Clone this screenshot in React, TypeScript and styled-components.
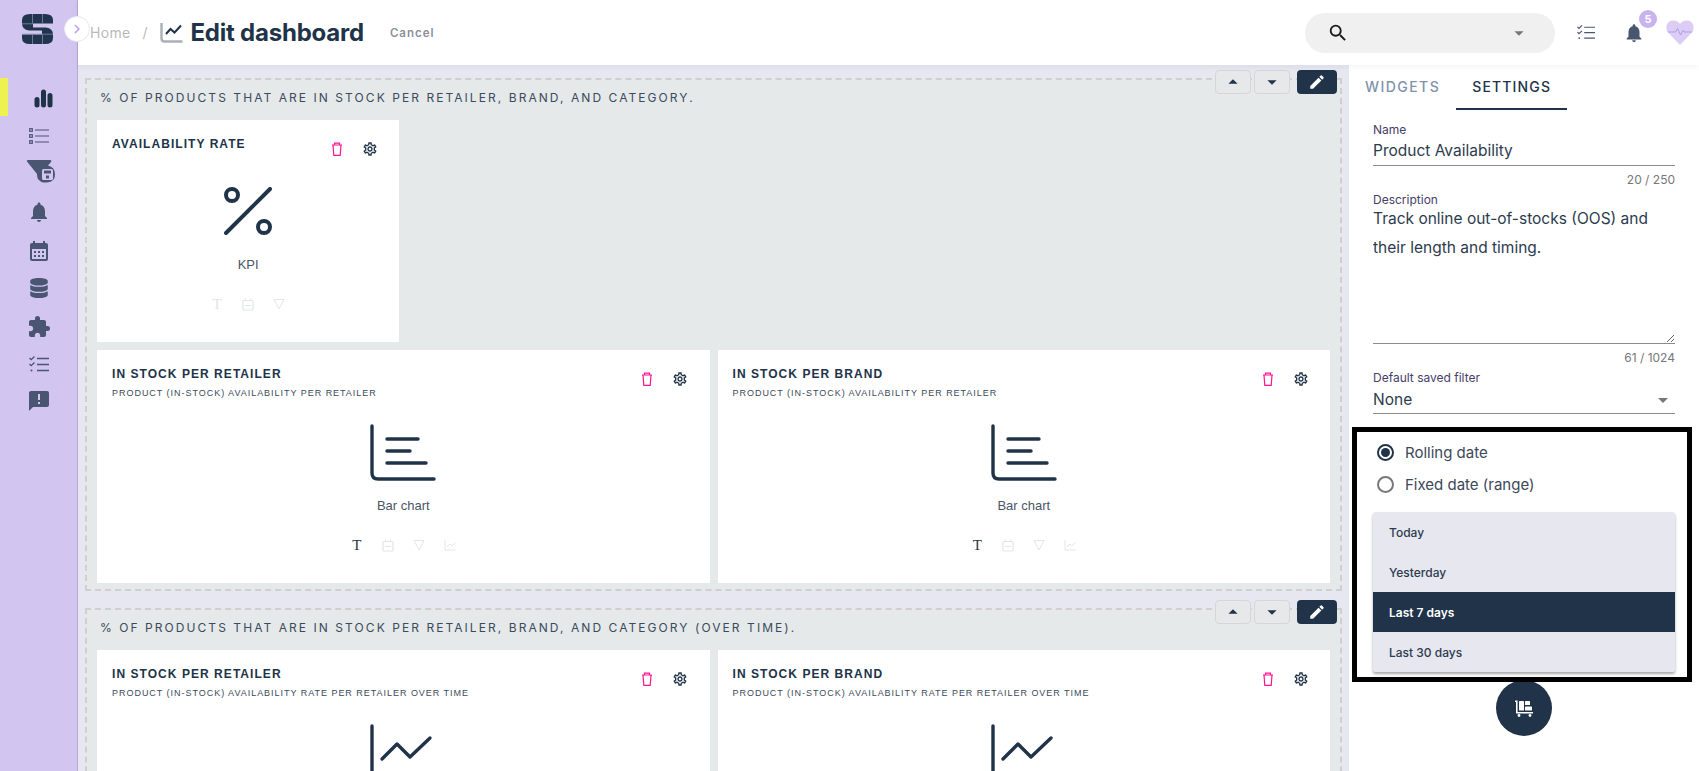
import React from "react";
import styled, { createGlobalStyle } from "styled-components";
import { MdNotifications, MdCalendarMonth, MdExtension, MdAnnouncement, MdOutlineSettings, MdEdit, MdSearch, MdArrowDropDown, MdArrowDropUp, MdChevronRight } from "react-icons/md";
import { FaDatabase } from "react-icons/fa";

const navy = "#203349";
const slate = "#4a5572";

const Global = createGlobalStyle`
  html, body { margin: 0; padding: 0; height: 100%; overflow: hidden; background: #fff; }
  body { font-family: Inter, "Liberation Sans", sans-serif; color: ${navy}; }
  * { box-sizing: border-box; }
`;

const Shell = styled.div`display: flex; width: 1699px; height: 771px; overflow: hidden; position: relative;`;
const Sidebar = styled.nav`width: 78px; flex: none; background: #d2c5f0; border-right: 1px solid #b7a8da; display: flex; flex-direction: column;`;
const LogoSlot = styled.div`height: 78px; padding: 14px 0 0 22px; flex: none;`;
const NavItem = styled.div<{ $active?: boolean; $nudge?: number; $dx?: number }>`
  height: 38px; display: flex; align-items: center; justify-content: center;
  border-left: 8px solid ${p => (p.$active ? "#eef24f" : "transparent")};
  color: ${p => (p.$active ? navy : slate)};
  padding-right: 8px;
  svg { transform: translate(${p => p.$dx ?? 0}px, ${p => p.$nudge ?? 0}px); }
`;
const Expand = styled.button`
  position: absolute; left: 64px; top: 16px; width: 26px; height: 26px; border-radius: 50%; border: 1px solid #ece6f8;
  background: #fff; color: #b9a2ea; display: flex; align-items: center; justify-content: center; padding: 0; z-index: 5;
`;
const Main = styled.div`flex: 1; min-width: 0; display: flex; flex-direction: column;`;
const Header = styled.header`
  height: 65px; flex: none; background: #fff; display: flex; align-items: center; padding-left: 12px;
  box-shadow: 0 2px 6px rgba(32, 51, 73, 0.06); position: relative; z-index: 2;
`;
const Crumb = styled.span`font-size: 14px; color: #b9b9b9; letter-spacing: 0.3px;`;
const Slash = styled.span`font-size: 14px; color: #b9b9b9; margin: 0 13px 0 12px;`;
const Title = styled.h1`margin: 0 0 0 7px; font-size: 24px; line-height: 30px; font-weight: 700; color: ${navy}; letter-spacing: -0.22px;`;
const Cancel = styled.span`margin-left: 26px; font-size: 11.5px; font-weight: 600; letter-spacing: 1px; color: #8a8f98;`;
const Right = styled.div`margin-left: auto; display: flex; align-items: center;`;
const Search = styled.div`
  width: 250px; height: 40px; border-radius: 20px; background: #f0f0f0; display: flex; align-items: center;
  justify-content: space-between; padding: 0 25px 0 22px; color: #1a1a1a;
  svg:last-child { color: #777; }
`;
const TopIcon = styled.div<{ $w: number; $pl?: number }>`
  width: ${p => p.$w}px; padding-left: ${p => p.$pl ?? 0}px; display: flex; align-items: center; justify-content: center; color: ${slate}; position: relative; height: 40px;
`;
const Badge = styled.span`
  position: absolute; left: 22px; top: -3px; width: 18px; height: 18px; border-radius: 50%; background: #c9b3ee; color: #fff;
  font-size: 11px; font-weight: 700; display: flex; align-items: center; justify-content: center;
`;
const Body = styled.div`flex: 1; min-height: 0; display: flex;`;
const Canvas = styled.main`flex: 1; min-width: 0; overflow: hidden; background: #e6e7f0; padding: 13px 7px 0;`;
const Section = styled.section`
  position: relative; background: #e5e9ea; border: 2px dashed #cfcfcf; padding: 0 10px 6px; margin-bottom: 17px;
`;
const SectionTitle = styled.h2`
  margin: 0 0 0 3px; padding: 10px 0 14px; font-size: 12px; line-height: 16px; font-weight: 400; letter-spacing: 2.06px;
  color: #3b4a5c; white-space: nowrap;
`;
const SectionTools = styled.div`position: absolute; top: -10px; right: 3px; display: flex; gap: 3px;`;
const MoveBtn = styled.button`
  width: 36px; height: 24px; padding: 0; background: #e6e8ea; border: 1px solid #d5d6d8; border-radius: 4px; color: ${navy};
  display: flex; align-items: center; justify-content: center;
`;
const EditBtn = styled.button`
  width: 40px; height: 24px; margin-left: 4px; padding: 0; border: 0; border-radius: 4px; background: ${navy}; color: #fff;
  display: flex; align-items: center; justify-content: center;
`;
const Grid = styled.div`display: grid; grid-template-columns: repeat(12, 1fr); column-gap: 8px; row-gap: 8px;`;
const Card = styled.article<{ $span: number; $h: number }>`
  grid-column: span ${p => p.$span}; height: ${p => p.$h}px; background: #fff; padding: 16px 21.5px 0 15px;
`;
const CardHead = styled.div`display: flex; min-height: 34px;`;
const CardText = styled.div`flex: 1; min-width: 0;`;
const CardTitle = styled.h3`margin: 0; font-family: "Liberation Sans", sans-serif; font-size: 12px; line-height: 16px; font-weight: 700; letter-spacing: 1.05px; color: ${navy};`;
const CardSub = styled.p`margin: 3px 0 0; font-family: "Liberation Sans", sans-serif; font-size: 9px; line-height: 16px; letter-spacing: 0.97px; color: #3b4a5c; white-space: nowrap;`;
const CardActions = styled.div`display: flex; gap: 17px; margin-top: 5px; flex: none; align-self: flex-start; color: ${navy};`;
const Preview = styled.div<{ $top: number }>`display: flex; flex-direction: column; align-items: center; margin: ${p => p.$top}px -21.5px 0 -15px;`;
const PreviewLabel = styled.div<{ $top: number }>`margin-top: ${p => p.$top}px; font-family: "Liberation Sans", sans-serif; font-size: 13px; line-height: 16px; color: #4a5568;`;
const Tools = styled.div`margin-top: 24px; height: 16px; display: flex; gap: 17px; justify-content: center;`;
const Tool = styled.span<{ $on?: boolean }>`
  width: 14px; height: 14px; display: flex; align-items: center; justify-content: center; color: ${p => (p.$on ? "#2a3442" : "#e3e5e9")};
`;
const TextGlyph = styled.span`font: 400 15px/14px "Liberation Serif", serif;`;
const Panel = styled.aside`width: 350px; flex: none; background: #fff; display: flex; flex-direction: column;`;
const Tabs = styled.div`height: 45px; flex: none; display: flex;`;
const Tab = styled.div<{ $on?: boolean }>`
  height: 45px; padding: 13px 16px 0; font-size: 14px; line-height: 17px; letter-spacing: ${p => (p.$on ? "1.15px" : "1.45px")}; font-weight: 500;
  color: ${p => (p.$on ? navy : "#7f93ad")}; border-bottom: 2px solid ${p => (p.$on ? navy : "transparent")};
`;
const Form = styled.div`padding: 12px 24px 0; display: flex; flex-direction: column;`;
const Label = styled.label`display: block; font-size: 12px; line-height: 16px; color: #46406b;`;
const TextInput = styled.input`
  display: block; width: 100%; height: 28px; padding: 0 0 2px; border: 0; border-bottom: 1px solid #8c8c8c; outline: 0; background: none;
  font: 400 15.5px Inter, sans-serif; color: #2d3b4e;
`;
const TextArea = styled.textarea`
  display: block; width: 100%; height: 140px; margin-top: -4px; padding: 0; border: 0; border-bottom: 1px solid #8c8c8c; outline: 0; background: none;
  font: 400 15.5px/29px Inter, sans-serif; color: #2d3b4e; resize: vertical;
`;
const Count = styled.div`height: 20px; margin-top: 6px; font-size: 12px; line-height: 16px; color: #777; text-align: right;`;
const Select = styled.div`
  height: 28px; border-bottom: 1px solid #8c8c8c; display: flex; align-items: center; justify-content: space-between;
  font-size: 15.5px; color: #2d3b4e; svg { color: #777; }
`;
const DateBox = styled.div`
  width: 340px; height: 255px; margin: 13px 0 0 3px; border: 5px solid #000; padding: 4px 12px 0 16px; background: #fff; position: relative; z-index: 1; flex: none;
`;
const RadioRow = styled.label`height: 32px; display: flex; align-items: center; gap: 11px; padding-left: 4px; font-size: 15px; color: #3c4859;`;
const RadioDot = styled.span<{ $on?: boolean }>`
  width: 17px; height: 17px; border-radius: 50%; border: 2px solid ${p => (p.$on ? navy : "#777")}; display: flex; align-items: center; justify-content: center;
  &::after { content: ""; width: 9px; height: 9px; border-radius: 50%; background: ${p => (p.$on ? navy : "transparent")}; }
`;
const Menu = styled.ul`
  margin: 12px 0 0; padding: 0; list-style: none; background: #e6e7ef; border-radius: 3px 3px 2px 2px;
  box-shadow: 0 2px 3px rgba(0, 0, 0, 0.35);
`;
const MenuItem = styled.li<{ $on?: boolean }>`
  height: 40px; display: flex; align-items: center; padding-left: 16px; font-size: 12px; font-weight: ${p => (p.$on ? 600 : 500)};
  background: ${p => (p.$on ? navy : "transparent")}; color: ${p => (p.$on ? "#fff" : "#2d3b4e")};
`;
const Fab = styled.button`
  width: 56px; height: 56px; margin: -2px auto 0; flex: none; border: 0; border-radius: 50%; background: ${navy}; color: #fff;
  display: flex; align-items: center; justify-content: center; padding: 0;
`;

const Logo = () => (
  <svg width="31" height="30" viewBox="0 0 31 30">
    <path d="M8 0H23Q31 0 31 6V9.5H11V13.5H24Q31 14 31 21V24Q31 30 23 30H8Q0 30 0 24V20.5H20V16.5H7Q0 16 0 9V6Q0 0 8 0Z" fill="#22354e" />
    <path d="M10.5 0V9.5M20.5 0V9.5M0 9.8H11M10.5 20.5V30M20.5 20.5V30M0 20.2H31" stroke="#7f8ba6" strokeWidth="0.8" fill="none" />
  </svg>
);
const BarsNav = () => (
  <svg width="19" height="19" viewBox="0 0 19 19" fill="currentColor">
    <rect x="0.5" y="8" width="5" height="10.5" rx="2.5" /><rect x="7" y="0.5" width="5" height="18" rx="2.5" /><rect x="13.5" y="4" width="5" height="14.5" rx="2.5" />
  </svg>
);
const ListNav = () => (
  <svg width="20" height="16" viewBox="0 0 20 16" fill="none" stroke="currentColor">
    <rect x="0.7" y="0.7" width="2.6" height="2.6" strokeWidth="1.2" /><rect x="0.7" y="6.7" width="2.6" height="2.6" strokeWidth="1.2" /><rect x="0.7" y="12.7" width="2.6" height="2.6" strokeWidth="1.2" />
    <path d="M6 2H20M6 8H20M6 14H20" strokeWidth="1.2" />
  </svg>
);
const FilterNav = () => (
  <svg width="30" height="24" viewBox="0 0 30 24" fill="currentColor">
    <path d="M1 1.5Q0 .3 2 0H24Q26 .2 25 2L22 5.5Q29 7 29 14.5 29 22 21 22.5 15 23 13 20 11 19 11 14Z" />
    <rect x="16" y="9" width="11" height="11" rx="1.5" fill="#d2c5f0" />
    <rect x="18" y="10.5" width="7" height="3" fill="currentColor" /><rect x="20" y="15.5" width="3" height="3" fill="currentColor" />
  </svg>
);
const Checks = ({ w = 20 }: { w?: number }) => (
  <svg width={w} height={w * 0.8} viewBox="0 0 20 16" fill="none" stroke="currentColor" strokeWidth="1.3">
    <path d="M.5 2L2.2 3.7 5.5.5M.5 8L2.2 9.7 5.5 6.5M8 2.5H20M8 8.5H20M8 14.5H20" />
    <circle cx="2.5" cy="14.5" r="1" fill="currentColor" stroke="none" />
  </svg>
);
const Trash = () => (
  <svg width="16" height="16" viewBox="0 0 16 16" fill="none" stroke="#ff1493" strokeWidth="1.2">
    <path d="M3 4H13M5.5 3.8V2.2H10.5V3.8M4 4L4.8 14.4H11.2L12 4" />
  </svg>
);
const Percent = () => (
  <svg width="48" height="48" viewBox="0 0 48 48" fill="none" stroke={navy} strokeWidth="4" strokeLinecap="round" style={{ display: "block" }}>
    <circle cx="8" cy="8" r="6" /><circle cx="40" cy="40" r="6" /><path d="M46 2L2 46" />
  </svg>
);
const BigChart = ({ line }: { line?: boolean }) => (
  <svg width="66" height="58" viewBox="0 0 66 58" fill="none" stroke={navy} strokeWidth="3.4" strokeLinecap="round" strokeLinejoin="round" style={{ display: "block" }}>
    <path d="M2 2V49Q2 55 8 55H64" />
    {line ? <path d="M12 35L27 20 40 33 60 14" /> : <path d="M17 15H48M17 27H40M17 39H56" />}
  </svg>
);
const Cal = () => (
  <svg width="12" height="13" viewBox="0 0 12 13" fill="none" stroke="currentColor" strokeWidth="1.2">
    <rect x="1" y="2.5" width="10" height="9.5" rx="1" /><path d="M3.5 0.5V3M8.5 0.5V3M3 7.5H9" />
  </svg>
);
const Funnel = () => (
  <svg width="12" height="12" viewBox="0 0 12 12" fill="none" stroke="currentColor" strokeWidth="1">
    <path d="M1 1.5H11L6 11Z" />
  </svg>
);
const MiniLine = () => (
  <svg width="12" height="12" viewBox="0 0 12 12" fill="none" stroke="currentColor" strokeWidth="1">
    <path d="M1 1V11H11.5M3 8L6 5 8 7 11 3.5" />
  </svg>
);
const TrendTitle = () => (
  <svg width="23" height="21" viewBox="0 0 23 21" fill="none" style={{ display: "block" }}>
    <path d="M1.5 1V16.5Q1.5 19.5 4.5 19.5H22.5" stroke="#a9b0ba" strokeWidth="2.4" />
    <path d="M6 12L10.5 7 14.5 10.5 21 3.5" stroke={navy} strokeWidth="2" />
  </svg>
);
const Heart = () => (
  <svg width="28" height="25" viewBox="0 0 28 25">
    <path d="M14 25L2 12.5C-1 9 0 2 6 .6 9.5 0 12.5 1.5 14 4 15.5 1.5 18.5 0 22 .6 28 2 29 9 26 12.5Z" fill="#dccdf6" />
    <path d="M2 12H9.5L11.5 8.5 14.5 15 17 10.5 18 12H26" fill="none" stroke="#b39ae6" strokeWidth="1" />
  </svg>
);
const Cart = () => (
  <svg width="18" height="17" viewBox="0 0 18 17" fill="#fff">
    <path d="M0 .5H2.6V12H18V13.6H1V2H0Z" /><rect x="4" y="1" width="5" height="9.5" rx=".6" /><rect x="10" y="1" width="5" height="4" rx=".6" /><rect x="10" y="6.5" width="7" height="4" rx=".6" />
    <circle cx="4" cy="15.5" r="1.4" /><circle cx="15" cy="15.5" r="1.4" />
  </svg>
);

type W = { title: string; sub?: string; kind: "kpi" | "bar" | "line"; span: number; h: number };

const Widget = ({ title, sub, kind, span, h }: W) => (
  <Card $span={span} $h={h}>
    <CardHead>
      <CardText>
        <CardTitle>{title}</CardTitle>
        {sub && <CardSub>{sub}</CardSub>}
      </CardText>
      <CardActions>
        <Trash />
        <MdOutlineSettings size={16} />
      </CardActions>
    </CardHead>
    {kind === "kpi" && (
      <Preview $top={17}>
        <Percent />
        <PreviewLabel $top={22}>KPI</PreviewLabel>
        <Tools>
          <Tool><TextGlyph>T</TextGlyph></Tool><Tool><Cal /></Tool><Tool><Funnel /></Tool>
        </Tools>
      </Preview>
    )}
    {kind === "bar" && (
      <Preview $top={23}>
        <BigChart />
        <PreviewLabel $top={16}>Bar chart</PreviewLabel>
        <Tools>
          <Tool $on><TextGlyph>T</TextGlyph></Tool><Tool><Cal /></Tool><Tool><Funnel /></Tool><Tool><MiniLine /></Tool>
        </Tools>
      </Preview>
    )}
    {kind === "line" && (
      <Preview $top={23}>
        <BigChart line />
      </Preview>
    )}
  </Card>
);

const SectionBar = () => (
  <SectionTools>
    <MoveBtn><MdArrowDropUp size={22} /></MoveBtn>
    <MoveBtn><MdArrowDropDown size={22} /></MoveBtn>
    <EditBtn><MdEdit size={18} /></EditBtn>
  </SectionTools>
);

export default function App() {
  return (
    <Shell>
      <Global />
      <Sidebar>
        <LogoSlot><Logo /></LogoSlot>
        <NavItem $active $dx={5} $nudge={1}><BarsNav /></NavItem>
        <NavItem $nudge={1}><ListNav /></NavItem>
        <NavItem $nudge={-1} $dx={2}><FilterNav /></NavItem>
        <NavItem $nudge={1}><MdNotifications size={24} /></NavItem>
        <NavItem $nudge={2}><MdCalendarMonth size={24} /></NavItem>
        <NavItem $nudge={1}><FaDatabase size={20} /></NavItem>
        <NavItem $nudge={2}><MdExtension size={24} /></NavItem>
        <NavItem $nudge={1}><Checks /></NavItem>
        <NavItem><MdAnnouncement size={24} /></NavItem>
      </Sidebar>
      <Expand><MdChevronRight size={18} /></Expand>
      <Main>
        <Header>
          <Crumb>Home</Crumb>
          <Slash>/</Slash>
          <TrendTitle />
          <Title>Edit dashboard</Title>
          <Cancel>Cancel</Cancel>
          <Right>
            <Search><MdSearch size={22} /><MdArrowDropDown size={22} /></Search>
            <TopIcon $w={62}><Checks w={18} /></TopIcon>
            <TopIcon $w={34}><MdNotifications size={22} /><Badge>5</Badge></TopIcon>
            <TopIcon $w={48} $pl={10}><Heart /></TopIcon>
          </Right>
        </Header>
        <Body>
          <Canvas>
            <Section>
              <SectionBar />
              <SectionTitle>% OF PRODUCTS THAT ARE IN STOCK PER RETAILER, BRAND, AND CATEGORY.</SectionTitle>
              <Grid>
                <Widget title="AVAILABILITY RATE" kind="kpi" span={3} h={222} />
                <div style={{ gridColumn: "span 9" }} />
                <Widget title="IN STOCK PER RETAILER" sub="PRODUCT (IN-STOCK) AVAILABILITY PER RETAILER" kind="bar" span={6} h={233} />
                <Widget title="IN STOCK PER BRAND" sub="PRODUCT (IN-STOCK) AVAILABILITY PER RETAILER" kind="bar" span={6} h={233} />
              </Grid>
            </Section>
            <Section>
              <SectionBar />
              <SectionTitle>% OF PRODUCTS THAT ARE IN STOCK PER RETAILER, BRAND, AND CATEGORY (OVER TIME).</SectionTitle>
              <Grid>
                <Widget title="IN STOCK PER RETAILER" sub="PRODUCT (IN-STOCK) AVAILABILITY RATE PER RETAILER OVER TIME" kind="line" span={6} h={233} />
                <Widget title="IN STOCK PER BRAND" sub="PRODUCT (IN-STOCK) AVAILABILITY RATE PER RETAILER OVER TIME" kind="line" span={6} h={233} />
              </Grid>
            </Section>
          </Canvas>
          <Panel>
            <Tabs>
              <Tab>WIDGETS</Tab>
              <Tab $on>SETTINGS</Tab>
            </Tabs>
            <Form>
              <Label>Name</Label>
              <TextInput readOnly value="Product Availability" />
              <Count>20 / 250</Count>
              <Label>Description</Label>
              <TextArea readOnly value="Track online out-of-stocks (OOS) and their length and timing." />
              <Count>61 / 1024</Count>
              <Label>Default saved filter</Label>
              <Select>None<MdArrowDropDown size={24} /></Select>
            </Form>
            <DateBox>
              <RadioRow><RadioDot $on />Rolling date</RadioRow>
              <RadioRow><RadioDot />Fixed date (range)</RadioRow>
              <Menu>
                <MenuItem>Today</MenuItem>
                <MenuItem>Yesterday</MenuItem>
                <MenuItem $on>Last 7 days</MenuItem>
                <MenuItem>Last 30 days</MenuItem>
              </Menu>
            </DateBox>
            <Fab><Cart /></Fab>
          </Panel>
        </Body>
      </Main>
    </Shell>
  );
}
